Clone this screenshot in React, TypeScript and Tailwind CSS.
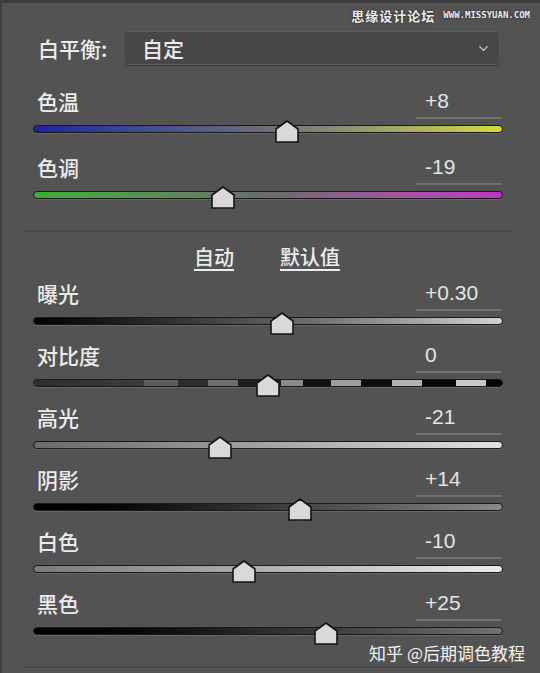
import { ChevronDown } from "lucide-react";

type Slider = {
  label: string;
  value: string;
  track: string;
  thumb: string;
  contrast?: boolean;
};

const top: Slider[] = [
  { label: "色温", value: "+8", track: "bg-linear-to-r from-[#20209e] via-[#6d6d78] to-[#d8d834]", thumb: "left-[241px]" },
  { label: "色调", value: "-19", track: "bg-linear-to-r from-[#35b035] via-[#6b6b6b] to-[#c52fc5]", thumb: "left-[177px]" },
];

const tone: Slider[] = [
  { label: "曝光", value: "+0.30", track: "bg-linear-to-r from-[#030303] via-[#5a5a5a] to-[#d2d2d2]", thumb: "left-[236px]" },
  { label: "对比度", value: "0", track: "bg-[#333]", thumb: "left-[222px]", contrast: true },
  { label: "高光", value: "-21", track: "bg-linear-to-r from-[#6a6a6a] to-[#e2e2e2]", thumb: "left-[174px]" },
  { label: "阴影", value: "+14", track: "bg-linear-to-r from-[#000] via-[#3a3a3a] to-[#8a8a8a]", thumb: "left-[254px]" },
  { label: "白色", value: "-10", track: "bg-linear-to-r from-[#7a7a7a] to-[#ebebeb]", thumb: "left-[198px]" },
  { label: "黑色", value: "+25", track: "bg-linear-to-r from-[#000] via-[#2e2e2e] to-[#727272]", thumb: "left-[280px]" },
];

// contrast bar: alternating light/dark bands, stronger toward the right
const bands = [
  "w-[110px] bg-linear-to-r from-[#2e2e2e] to-[#3c3c3c]",
  "w-[34px] bg-[#5d5d5d]",
  "w-[30px] bg-[#2c2c2c]",
  "w-[30px] bg-[#6e6e6e]",
  "w-[43px] bg-[#1e1e1e]",
  "w-[22px] bg-[#8a8a8a]",
  "w-[28px] bg-[#111]",
  "w-[30px] bg-[#9e9e9e]",
  "w-[31px] bg-[#0c0c0c]",
  "w-[30px] bg-[#b4b4b4]",
  "w-[34px] bg-[#080808]",
  "w-[30px] bg-[#c8c8c8]",
  "flex-1 bg-[#050505]",
];

function Thumb({ pos }: { pos: string }) {
  return (
    <svg className={`absolute -top-[6px] ${pos} h-[23px] w-[24px]`} viewBox="0 0 24 23">
      <polygon points="12,1 23,9 23,22 1,22 1,9" fill="#d9d9d9" stroke="#141414" strokeWidth="1.6" strokeLinejoin="round" />
    </svg>
  );
}

function Row({ s }: { s: Slider }) {
  return (
    <div className="mx-[9px] flex flex-col">
      <div className="flex h-[36px] items-center justify-between pl-[4px]">
        <span className="text-[21px] font-medium leading-none text-[#ececec]">{s.label}</span>
        <div className="mr-[1px] flex h-full w-[86px] items-center border-b-2 border-[#707070] pl-[9px] font-['Liberation_Sans',sans-serif] text-[21px] leading-none text-[#e4e4e4]">
          {s.value}
        </div>
      </div>
      <div
        className={`relative mt-[6px] h-[8px] rounded-full border border-[#1a1a1a] shadow-[0_1px_0_#666] ${s.track}`}
      >
        {s.contrast && (
          <div className="flex h-full w-full overflow-hidden rounded-full">
            {bands.map((b, i) => (
              <div key={i} className={`h-full ${b}`} />
            ))}
          </div>
        )}
        <Thumb pos={s.thumb} />
      </div>
    </div>
  );
}

export default function App() {
  return (
    <div className="flex h-[673px] w-[540px] flex-col border-t-[3px] border-l-2 border-[#3e3e3e] bg-[#535353] pt-[4px] pr-[28px] pl-[22px] font-['Noto_Sans_CJK_SC',sans-serif]">
      <div className="-mr-[18px] flex h-[18px] items-center justify-end gap-[8px] text-[#efefef] [text-shadow:0_0_2px_#111]">
        <span className="text-[13px] font-bold tracking-[1px]">思缘设计论坛</span>
        <span className="font-['DejaVu_Sans_Mono',monospace] text-[9px] font-bold">WWW.MISSYUAN.COM</span>
      </div>

      <div className="mt-[6px] flex h-[34px] items-center">
        <span className="w-[99px] pl-[14px] text-[21px] font-medium leading-none text-[#ececec]">白平衡:</span>
        <div className="mr-[12px] flex h-full flex-1 items-center justify-between rounded-[4px] border border-[#5d5d5d] bg-[#474747] pr-[8px] pl-[18px] shadow-[0_1px_1px_#3a3a3a]">
          <span className="text-[21px] font-medium leading-none text-[#ececec]">自定</span>
          <ChevronDown size={15} strokeWidth={2} color="#d6d6d6" />
        </div>
      </div>

      <div className="mt-[18px] flex flex-col gap-[16px]">
        {top.map((s) => (
          <Row key={s.label} s={s} />
        ))}
      </div>

      <div className="mt-[31px] h-[2px] bg-[#474747]" />

      <div className="mt-[10px] flex h-[30px] items-center gap-[46px] pl-[170px] text-[20px] font-medium leading-none text-[#ececec]">
        <span className="underline decoration-2 underline-offset-4">自动</span>
        <span className="underline decoration-2 underline-offset-4">默认值</span>
      </div>

      <div className="mt-[3px] flex flex-col gap-[12px]">
        {tone.map((s) => (
          <Row key={s.label} s={s} />
        ))}
      </div>

      <div className="mt-[7px] flex h-[20px] items-center justify-end -mr-[13px] text-[17px] leading-none text-[#f2f2f2]">
        知乎 @后期调色教程
      </div>

      <div className="mt-[4px] h-[2px] bg-[#474747]" />
    </div>
  );
}
